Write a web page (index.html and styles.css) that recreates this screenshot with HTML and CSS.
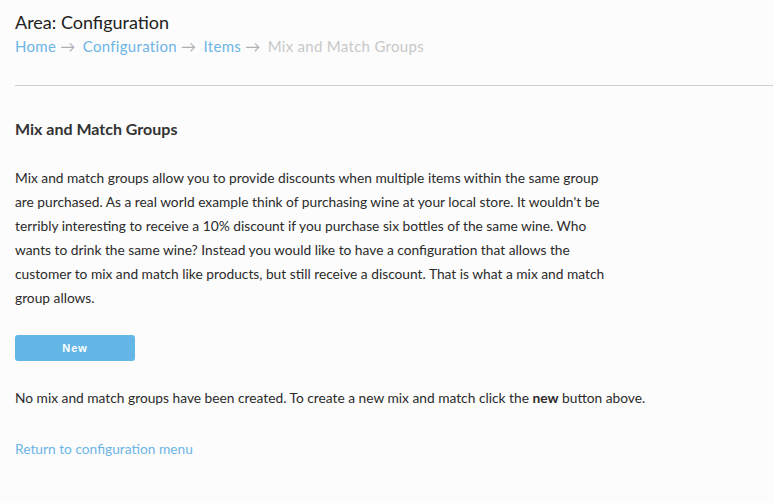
FILE: index.html
```html
<!DOCTYPE html>
<html lang="en">
<head>
    <meta charset="UTF-8">
    <title>Mix and Match Groups</title>
    <link rel="stylesheet" href="styles.css">
</head>
<body>
    <header class="page-header">
        <h1 class="area-title">Area: Configuration</h1>
        <nav class="breadcrumb">
            <a href="#">Home</a> <span class="sep">&rarr;</span>
            <a href="#">Configuration</a> <span class="sep">&rarr;</span>
            <a href="#">Items</a> <span class="sep">&rarr;</span>
            <span class="current">Mix and Match Groups</span>
        </nav>
    </header>

    <main class="content">
        <h2 class="section-title">Mix and Match Groups</h2>
        <p class="intro">
            Mix and match groups allow you to provide discounts when multiple items within the same group
            are purchased. As a real world example think of purchasing wine at your local store. It wouldn't be
            terribly interesting to receive a 10% discount if you purchase six bottles of the same wine. Who
            wants to drink the same wine? Instead you would like to have a configuration that allows the
            customer to mix and match like products, but still receive a discount. That is what a mix and match
            group allows.
        </p>

        <button class="btn">New</button>

        <p class="empty">No mix and match groups have been created. To create a new mix and match click the <strong>new</strong> button above.</p>

        <a class="back-link" href="#">Return to configuration menu</a>
    </main>
</body>
</html>
```

FILE: styles.css
```css
* {
    margin: 0;
    padding: 0;
    box-sizing: border-box;
}

body {
    font-family: Lato, 'Open Sans', sans-serif;
    background: #fcfcfc;
    color: #2b2b2b;
    padding: 0 0 0 15px;
}

a {
    color: #6db5e6;
    text-decoration: none;
}

.page-header {
    padding-top: 11px;
    padding-bottom: 27px;
    border-bottom: 1px solid #cfcfcf;
}

.area-title {
    font-size: 18px;
    font-weight: 400;
    line-height: 22px;
    color: #222;
}

.breadcrumb {
    font-size: 15px;
    line-height: 24px;
    margin-top: 1px;
    letter-spacing: 0.3px;
}

.breadcrumb .sep {
    color: #b0b0b0;
    font-size: 15px;
    margin-right: 3px;
}

.breadcrumb .current {
    color: #c8c8c8;
}

.content {
    padding-top: 32px;
}

.section-title {
    font-size: 16px;
    font-weight: 700;
    line-height: 22px;
    color: #333;
}

.intro {
    font-size: 13.75px;
    line-height: 24px;
    width: 600px;
    margin-top: 26px;
}

.btn {
    display: block;
    width: 120px;
    height: 26px;
    margin-top: 25px;
    background: #63b6e6;
    color: #fff;
    border: none;
    border-radius: 3px;
    font-family: 'Liberation Sans', Arial, sans-serif;
    font-size: 11px;
    font-weight: 700;
    letter-spacing: 1px;
    cursor: pointer;
}

.empty {
    font-size: 13.75px;
    line-height: 24px;
    margin-top: 25px;
}

.back-link {
    display: inline-block;
    font-size: 13.75px;
    line-height: 24px;
    margin-top: 27px;
}
```
